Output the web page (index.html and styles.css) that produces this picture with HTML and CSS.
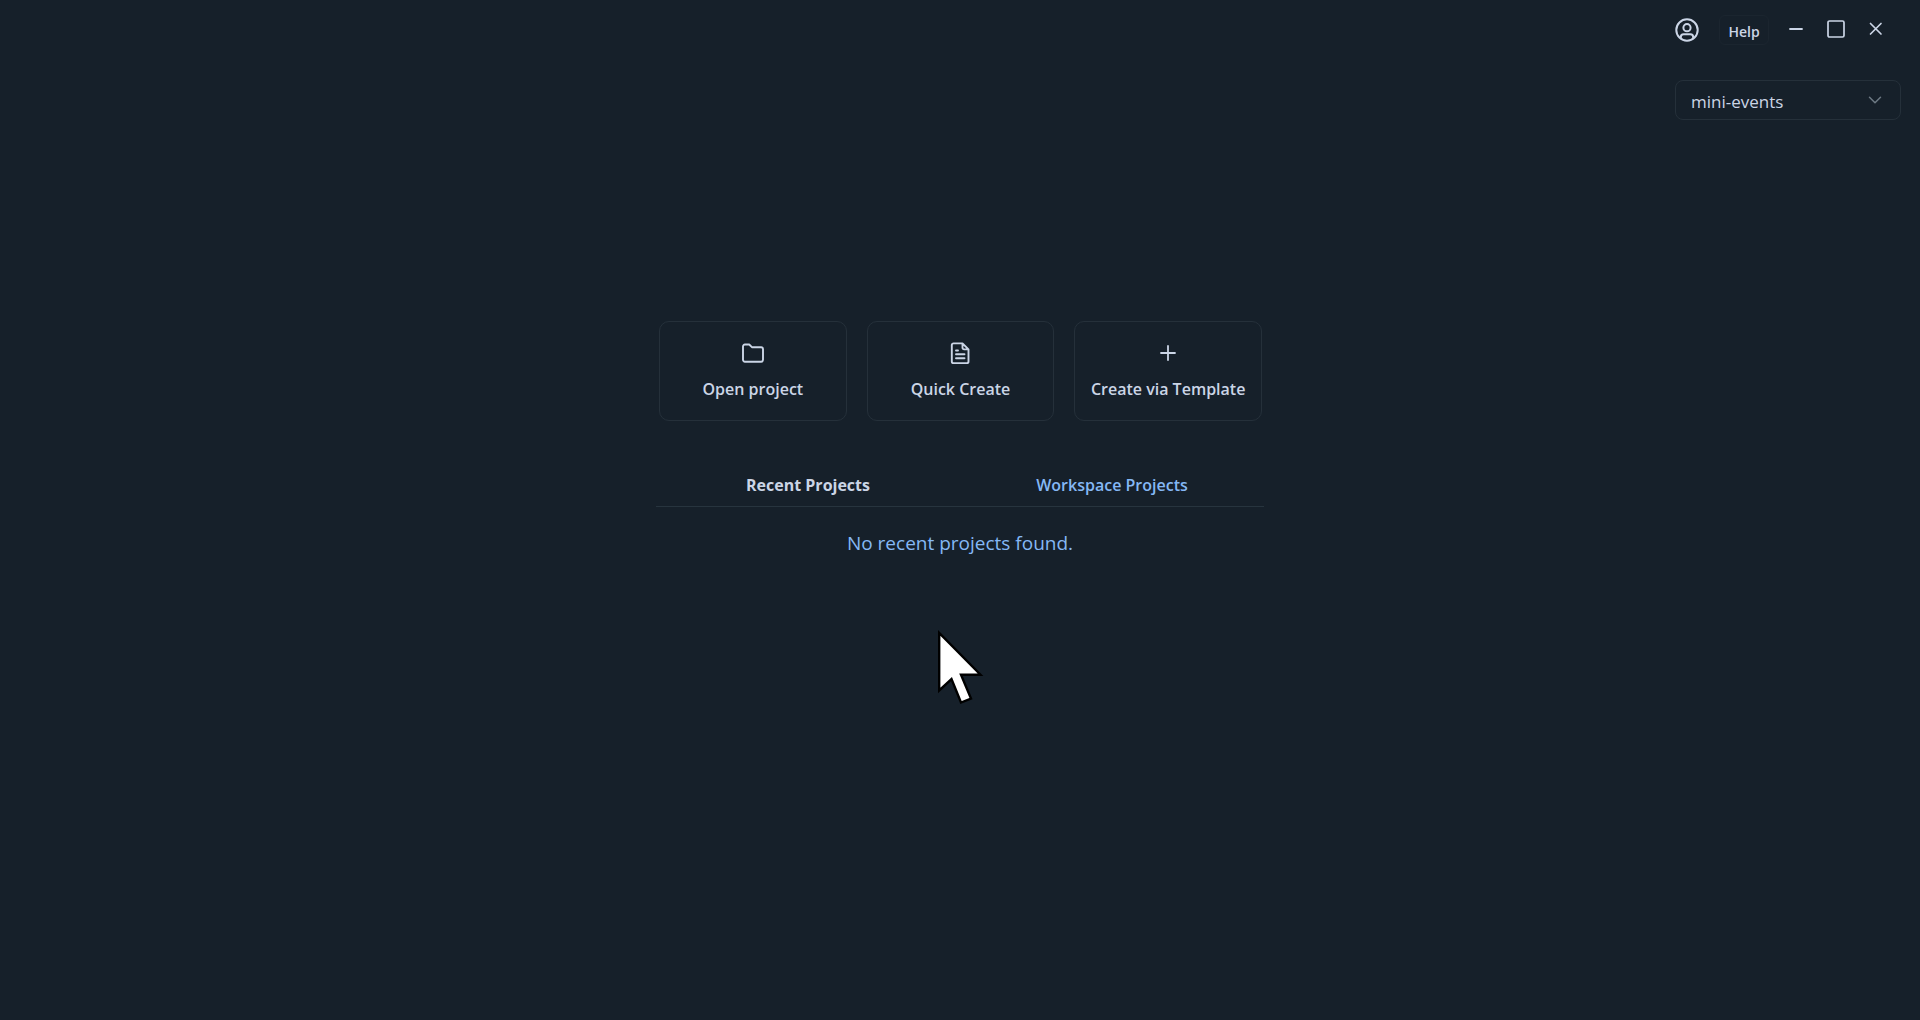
FILE: index.html
```html
<!DOCTYPE html>
<html lang="en">
<head>
<meta charset="utf-8">
<title>Projects</title>
<link rel="stylesheet" href="styles.css">
</head>
<body>
<header class="titlebar">
  <button class="icon-button account" aria-label="Account">
    <svg width="24" height="24" viewBox="0 0 24 24" fill="none" stroke="currentColor" stroke-width="2"><circle cx="12" cy="12" r="10.7"/><circle cx="12" cy="9.7" r="3.6"/><path d="M5.8 20.2v-1.2a2.8 2.8 0 0 1 2.8-2.8h6.8a2.8 2.8 0 0 1 2.8 2.8v1.2"/></svg>
  </button>
  <button class="help">Help</button>
  <div class="window-controls">
    <button class="icon-button" aria-label="Minimize">
      <svg width="20" height="20" viewBox="0 0 20 20" fill="none" stroke="currentColor" stroke-width="1.8" stroke-linecap="round"><path d="M4 10h12"/></svg>
    </button>
    <button class="icon-button" aria-label="Maximize">
      <svg width="20" height="20" viewBox="0 0 20 20" fill="none" stroke="currentColor" stroke-width="1.7"><rect x="2" y="2" width="16" height="16" rx="1.5"/></svg>
    </button>
    <button class="icon-button" aria-label="Close">
      <svg width="20" height="20" viewBox="0 0 20 20" fill="none" stroke="currentColor" stroke-width="1.7" stroke-linecap="round"><path d="M4.5 4.5l10.500 10.500M15 4.500l-10.500 10.500"/></svg>
    </button>
  </div>
</header>

<div class="workspace-bar">
  <div class="workspace">
    <select class="workspace-select" aria-label="Workspace">
      <option>mini-events</option>
    </select>
    <svg class="workspace-chevron" width="14" height="8" viewBox="0 0 14 8" fill="none" stroke="currentColor" stroke-width="1.5" stroke-linecap="round" stroke-linejoin="round"><path d="M1.500 1.200L7 6.700l5.500-5.500"/></svg>
  </div>
</div>

<main class="start">
  <div class="actions">
    <button class="action">
      <svg width="24" height="24" viewBox="0 0 24 24" fill="none" stroke="currentColor" stroke-width="1.900" stroke-linejoin="round"><path d="M2 18.800V5.400A1.900 1.900 0 0 1 3.900 3.500h4.300l2.700 2.700h9.200A1.900 1.900 0 0 1 22 8.100v10.700a1.900 1.900 0 0 1-1.900 1.900H3.900A1.900 1.900 0 0 1 2 18.800z"/></svg>
      <span>Open project</span>
    </button>
    <button class="action">
      <svg width="24" height="24" viewBox="0 0 24 24" fill="none" stroke="currentColor" stroke-width="1.900" stroke-linecap="round" stroke-linejoin="round"><path d="M5.500 2.400h9l6 6v12a1.700 1.700 0 0 1-1.700 1.700H5.500a1.700 1.700 0 0 1-1.700-1.700V4.100A1.700 1.700 0 0 1 5.500 2.400zM14.500 2.600v4.200a1.600 1.600 0 0 0 1.600 1.600h4.200M8 9.500h2M8 13.300h8.500M8 17.200h8.500"/></svg>
      <span>Quick Create</span>
    </button>
    <button class="action">
      <svg width="24" height="24" viewBox="0 0 24 24" fill="none" stroke="currentColor" stroke-width="1.800" stroke-linecap="round"><path d="M12 5v14M5 12h14"/></svg>
      <span>Create via Template</span>
    </button>
  </div>

  <div class="tabs" role="tablist">
    <button class="tab tab-active" role="tab" aria-selected="true">Recent Projects</button>
    <button class="tab" role="tab" aria-selected="false">Workspace Projects</button>
  </div>
  <p class="empty">No recent projects found.</p>

  <svg class="pointer" width="48" height="76" viewBox="0 0 48 76" fill="#fff" stroke="#000" stroke-width="2.400"><path d="M2.200 4v57.500L14.500 50l9.500 23.500 10-4L24 45.700h19.500z"/></svg>
</main>
</body>
</html>
```
FILE: styles.css
```css
* {
  box-sizing: border-box;
}

:root {
  --background: #16202a;
  --border: #25303a;
  --text: #cbd5e6;
  --accent: #85b8f5;
}

body {
  margin: 0;
  min-height: 100vh;
  background: var(--background);
  color: var(--text);
  font-family: "Open Sans", "Noto Sans", sans-serif;
}

button,
select {
  margin: 0;
  padding: 0;
  border: 0;
  background: none;
  color: inherit;
  font: inherit;
  cursor: pointer;
}

svg {
  display: block;
}

.titlebar {
  display: flex;
  align-items: center;
  justify-content: flex-end;
  height: 60px;
  padding-right: 34px;
}

.account {
  margin-right: 20px;
}

.help {
  width: 50px;
  height: 30px;
  padding-top: 2px;
  border: 1px solid #1b252f;
  border-radius: 6px;
  font-size: 14px;
  font-weight: 600;
}

.window-controls {
  display: flex;
  gap: 20px;
  margin-left: 17px;
  padding-bottom: 2px;
}

.workspace-bar {
  display: flex;
  justify-content: flex-end;
  padding: 20px 19px 0;
}

.workspace {
  position: relative;
  width: 226px;
}

.workspace-select {
  width: 100%;
  height: 40px;
  padding: 2px 40px 0 15px;
  border: 1px solid var(--border);
  border-radius: 8px;
  appearance: none;
  font-size: 17px;
}

.workspace-chevron {
  position: absolute;
  top: 16px;
  right: 19px;
  color: #6d7984;
  pointer-events: none;
}

.start {
  position: relative;
  max-width: 608px;
  margin: 0 auto;
  padding-top: 201px;
}

.actions {
  display: grid;
  grid-template-columns: repeat(3, 1fr);
  gap: 20px;
  padding: 0 2px 0 3px;
}

.action {
  display: flex;
  flex-direction: column;
  align-items: center;
  gap: 12px;
  height: 100px;
  padding-top: 19px;
  border: 1px solid var(--border);
  border-radius: 10px;
  font-size: 16px;
  font-weight: 600;
  line-height: 24px;
  white-space: nowrap;
}

.tabs {
  display: grid;
  grid-template-columns: 1fr 1fr;
  margin-top: 40px;
  border-bottom: 1px solid #27343e;
}

.tab {
  height: 45px;
  padding-top: 2px;
  color: var(--accent);
  font-size: 16px;
  font-weight: 600;
}

.tab-active {
  color: var(--text);
  font-weight: 700;
}

.empty {
  margin: 22px 0 0;
  color: var(--accent);
  font-size: 19px;
  line-height: 28px;
  text-align: center;
}

.pointer {
  position: absolute;
  top: 509px;
  left: 281px;
}
```
